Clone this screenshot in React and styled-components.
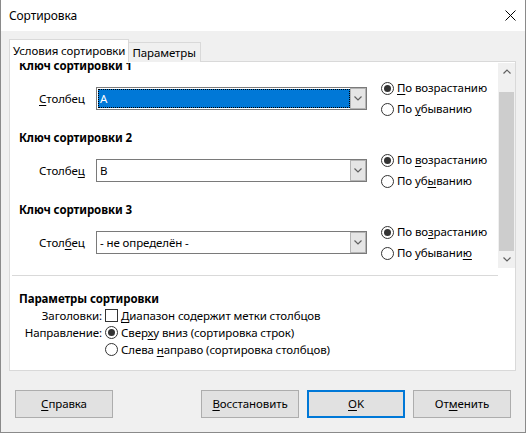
import React from 'react';
import styled, { createGlobalStyle } from 'styled-components';

const GlobalStyle = createGlobalStyle`
  html, body {
    margin: 0;
    padding: 0;
    background: #ffffff;
  }
  body {
    font-family: 'Noto Sans', 'Segoe UI', sans-serif;
    font-size: 11.5px;
    letter-spacing: -0.1px;
    color: #000;
  }
  * {
    box-sizing: border-box;
  }
  u {
    text-underline-offset: 2px;
  }
`;

const Window = styled.div`
  width: 526px;
  height: 433px;
  border: 1px solid #8a8a8a;
  border-top: none;
  background: #f0f0f0;
  display: flex;
  flex-direction: column;
`;

const TitleBar = styled.div`
  height: 31px;
  flex: none;
  background: #fff;
  display: flex;
  align-items: center;
  justify-content: space-between;
  padding: 0 9px 0 8px;
  font-size: 12px;
  line-height: 16px;
`;

const Body = styled.div`
  flex: 1;
  display: flex;
  flex-direction: column;
  padding: 8px 9px 0 8px;
`;

const TabBar = styled.div`
  display: flex;
  align-items: flex-end;
  height: 23px;
  line-height: 16px;
`;

const Tab = styled.div`
  position: relative;
  z-index: ${(p) => (p.$active ? 1 : 0)};
  height: ${(p) => (p.$active ? '23px' : '20px')};
  padding: ${(p) => (p.$active ? '3px 3px 0 3px' : '2px 4px 0 3px')};
  background: ${(p) => (p.$active ? '#fff' : '#f0f0f0')};
  border: 1px solid #d9d9d9;
  border-bottom: none;
  ${(p) => !p.$active && 'border-left: none;'}
  white-space: nowrap;
`;

const Panel = styled.div`
  margin-top: -1px;
  height: 310px;
  flex: none;
  background: #fff;
  border: 1px solid #d9d9d9;
  padding-top: 1px;
  display: flex;
  flex-direction: column;
`;

const ScrollArea = styled.div`
  height: 205px;
  flex: none;
  display: flex;
`;

const Viewport = styled.div`
  flex: 1;
  overflow: hidden;
`;

const Content = styled.div`
  margin-top: -5px;
  padding-left: 9px;
  display: flex;
  flex-direction: column;
  gap: 10px;
`;

const Section = styled.div`
  display: flex;
  flex-direction: column;
  gap: 3px;
`;

const Heading = styled.div`
  font-weight: 700;
  line-height: 16px;
  height: 16px;
  white-space: nowrap;
`;

const KeyRow = styled.div`
  height: 43px;
  display: flex;
  align-items: center;
  padding-left: 20px;
`;

const FieldLabel = styled.div`
  width: 57px;
  flex: none;
  line-height: 16px;
`;

const Combo = styled.div`
  width: 271px;
  height: 23px;
  flex: none;
  border: 1px solid #7a7a7a;
  background: #fff;
  display: flex;
  align-items: stretch;
  padding: 1px;
`;

const ComboValue = styled.div`
  flex: 1;
  display: flex;
  align-items: center;
  padding-left: ${(p) => (p.$focused ? '1px' : '2px')};
  line-height: 16px;
  background: ${(p) => (p.$focused ? '#0078d7' : '#fff')};
  color: ${(p) => (p.$focused ? '#fff' : '#000')};
  border: ${(p) => (p.$focused ? '1px dotted #000' : 'none')};
  white-space: nowrap;
`;

const ComboButton = styled.div`
  width: 16px;
  flex: none;
  margin: -1px -1px -1px 0;
  background: #e5e5e5;
  border: 1px solid #b4b4b4;
  display: flex;
  align-items: center;
  justify-content: center;
`;

const RadioGroup = styled.div`
  margin-left: 14px;
  display: flex;
  flex-direction: column;
`;

const ChoiceRow = styled.label`
  height: ${(p) => p.$h || 21}px;
  display: flex;
  align-items: center;
  gap: ${(p) => p.$gap || 3}px;
  line-height: 16px;
  white-space: nowrap;
`;

const RadioMark = styled.span`
  width: 13px;
  height: 13px;
  flex: none;
  border: 1px solid #333;
  border-radius: 50%;
  background: #fff;
  display: flex;
  align-items: center;
  justify-content: center;
  &::after {
    content: '';
    width: 7px;
    height: 7px;
    border-radius: 50%;
    background: ${(p) => (p.$checked ? '#333' : 'transparent')};
  }
`;

const CheckMark = styled.span`
  width: 13px;
  height: 13px;
  flex: none;
  border: 1px solid #333;
  background: #fff;
`;

const ScrollBar = styled.div`
  width: 17px;
  flex: none;
  background: #f0f0f0;
  display: flex;
  flex-direction: column;
`;

const ScrollArrow = styled.div`
  height: 17px;
  flex: none;
  display: flex;
  align-items: center;
  justify-content: center;
`;

const ScrollTrack = styled.div`
  flex: 1;
  display: flex;
  flex-direction: column;
  padding: 12px 1px 0 1px;
`;

const ScrollThumb = styled.div`
  flex: 1;
  background: #cdcdcd;
`;

const Separator = styled.div`
  height: 1px;
  flex: none;
  margin: 7px 17px 0 2px;
  background: #d9d9d9;
`;

const Options = styled.div`
  padding: 15px 0 0 9px;
  display: flex;
  flex-direction: column;
`;

const OptionGrid = styled.div`
  display: grid;
  grid-template-columns: 83px auto;
  column-gap: 3px;
  grid-auto-rows: 17px;
  align-items: center;
  line-height: 16px;
`;

const OptionLabel = styled.div`
  text-align: right;
  white-space: nowrap;
`;

const ButtonRow = styled.div`
  margin: 19px 5px 0 6px;
  display: flex;
  justify-content: space-between;
`;

const ButtonGroup = styled.div`
  display: flex;
  gap: 8px;
`;

const Button = styled.button`
  width: 98px;
  height: 28px;
  padding: 0;
  font: inherit;
  letter-spacing: inherit;
  color: #000;
  background: #e1e1e1;
  border: ${(p) => (p.$default ? '2px solid #0078d7' : '1px solid #adadad')};
  line-height: 16px;
`;

function Chevron({ up, color = '#606060' }) {
  return (
    <svg width="8" height="5" viewBox="0 0 8 5">
      <path
        d={up ? 'M0.5 4.5 L4 1 L7.5 4.5' : 'M0.5 0.5 L4 4 L7.5 0.5'}
        fill="none"
        stroke={color}
        strokeWidth="1.2"
      />
    </svg>
  );
}

function CloseIcon() {
  return (
    <svg width="11" height="11" viewBox="0 0 11 11">
      <path d="M0.5 0.5 L10.5 10.5 M10.5 0.5 L0.5 10.5" stroke="#000" strokeWidth="1" />
    </svg>
  );
}

const keys = [
  {
    title: 'Ключ сортировки 1',
    label: ['', 'С', 'толбец'],
    value: 'A',
    focused: true,
    asc: ['', 'П', 'о возрастанию'],
    desc: ['По ', 'у', 'быванию'],
  },
  {
    title: 'Ключ сортировки 2',
    label: ['Столбе', 'ц', ''],
    value: 'B',
    asc: ['По ', 'в', 'озрастанию'],
    desc: ['По уб', 'ы', 'ванию'],
  },
  {
    title: 'Ключ сортировки 3',
    label: ['Стол', 'б', 'ец'],
    value: '- не определён -',
    asc: ['По во', 'з', 'растанию'],
    desc: ['По убывани', 'ю', ''],
  },
];

function Mnemonic({ parts }) {
  return (
    <>
      {parts[0]}
      {parts[1] && <u>{parts[1]}</u>}
      {parts[2]}
    </>
  );
}

export default function App() {
  return (
    <>
      <GlobalStyle />
      <Window>
        <TitleBar>
          <span>Сортировка</span>
          <CloseIcon />
        </TitleBar>
        <Body>
          <TabBar>
            <Tab $active>Условия сортировки</Tab>
            <Tab>Параметры</Tab>
          </TabBar>
          <Panel>
            <ScrollArea>
              <Viewport>
                <Content>
                  {keys.map((k) => (
                    <Section key={k.title}>
                      <Heading>{k.title}</Heading>
                      <KeyRow>
                        <FieldLabel>
                          <Mnemonic parts={k.label} />
                        </FieldLabel>
                        <Combo>
                          <ComboValue $focused={k.focused}>{k.value}</ComboValue>
                          <ComboButton>
                            <Chevron />
                          </ComboButton>
                        </Combo>
                        <RadioGroup>
                          <ChoiceRow>
                            <RadioMark $checked />
                            <span>
                              <Mnemonic parts={k.asc} />
                            </span>
                          </ChoiceRow>
                          <ChoiceRow>
                            <RadioMark />
                            <span>
                              <Mnemonic parts={k.desc} />
                            </span>
                          </ChoiceRow>
                        </RadioGroup>
                      </KeyRow>
                    </Section>
                  ))}
                </Content>
              </Viewport>
              <ScrollBar>
                <ScrollArrow>
                  <Chevron up />
                </ScrollArrow>
                <ScrollTrack>
                  <ScrollThumb />
                </ScrollTrack>
                <ScrollArrow>
                  <Chevron />
                </ScrollArrow>
              </ScrollBar>
            </ScrollArea>
            <Separator />
            <Options>
              <Heading>Параметры сортировки</Heading>
              <OptionGrid>
                <OptionLabel>Заголовки:</OptionLabel>
                <ChoiceRow $h={17} $gap={3}>
                  <CheckMark />
                  <span>
                    <u>Д</u>иапазон содержит метки столбцов
                  </span>
                </ChoiceRow>
                <OptionLabel>Направление:</OptionLabel>
                <ChoiceRow $h={17} $gap={3}>
                  <RadioMark $checked />
                  <span>
                    Свер<u>х</u>у вниз (сортировка строк)
                  </span>
                </ChoiceRow>
                <span />
                <ChoiceRow $h={17} $gap={3}>
                  <RadioMark />
                  <span>
                    Слева <u>н</u>аправо (сортировка столбцов)
                  </span>
                </ChoiceRow>
              </OptionGrid>
            </Options>
          </Panel>
          <ButtonRow>
            <Button>
              <u>С</u>правка
            </Button>
            <ButtonGroup>
              <Button>
                <u>В</u>осстановить
              </Button>
              <Button $default>
                <u>O</u>K
              </Button>
              <Button>
                От<u>м</u>енить
              </Button>
            </ButtonGroup>
          </ButtonRow>
        </Body>
      </Window>
    </>
  );
}
